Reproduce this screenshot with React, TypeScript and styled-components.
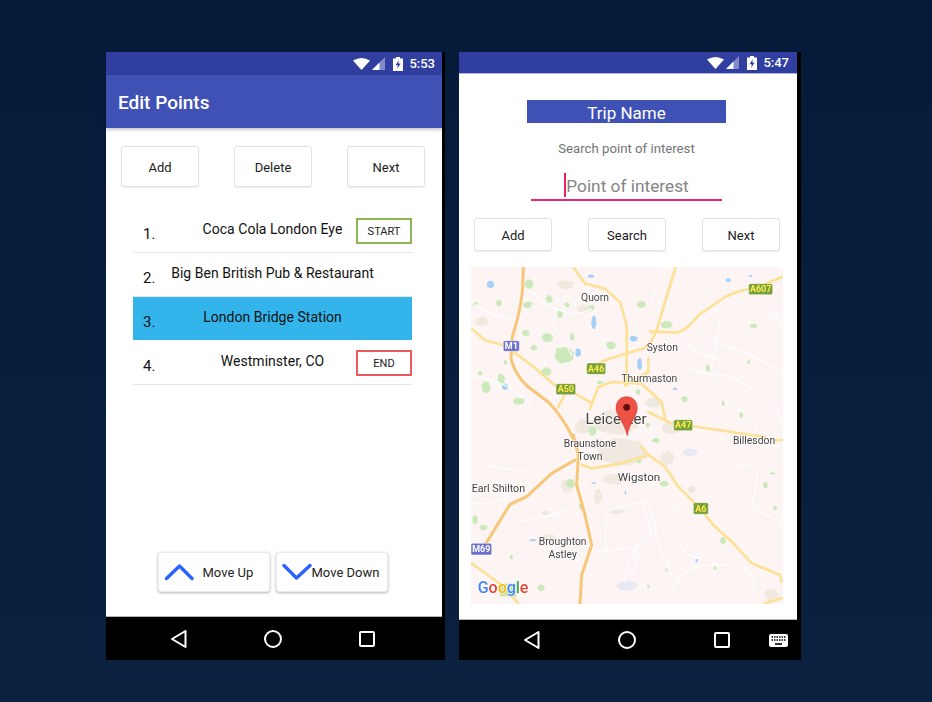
import React from "react";
import styled, { createGlobalStyle } from "styled-components";

const Global = createGlobalStyle`
  html, body { margin: 0; padding: 0; }
  body { font-family: Roboto, "Liberation Sans", sans-serif; }
  * { box-sizing: border-box; }
`;

const Page = styled.div`
  width: 932px;
  height: 702px;
  overflow: hidden;
  display: flex;
  align-items: flex-start;
  gap: 14px;
  padding: 52px 0 0 106px;
  background: linear-gradient(180deg, #041a38 0%, #0a2240 100%);
`;
const Phone = styled.div<{ $width: number; $screen: number }>`
  width: ${(p) => p.$width}px;
  height: 608px;
  background: #000;
  display: flex;
  flex-direction: column;
  & > .screen { width: ${(p) => p.$screen}px; }
`;
const Screen = styled.div`
  flex: 1;
  min-height: 0;
  background: #fff;
  display: flex;
  flex-direction: column;
`;
const StatusBar = styled.div<{ $height: number; $right: number; $line?: boolean }>`
  height: ${(p) => p.$height}px;
  flex: none;
  background: #303f9f;
  display: flex;
  align-items: center;
  justify-content: flex-end;
  padding-right: ${(p) => p.$right}px;
  border-bottom: ${(p) => (p.$line ? "1px solid #a9b2e0" : "none")};
`;
const Clock = styled.span`
  color: #fff;
  font-size: 13px;
  font-weight: 500;
  margin-left: 6px;
`;
const AppBar = styled.div`
  height: 53px;
  flex: none;
  background: #3f51b5;
  display: flex;
  align-items: center;
  padding: 2px 0 0 12px;
  color: #fff;
  font-size: 19px;
  font-weight: 500;
  box-shadow: 0 2px 3px rgba(0, 0, 0, 0.22);
`;
const Toolbar = styled.div<{ $top: number }>`
  display: flex;
  justify-content: space-between;
  padding: 0 17px 0 15px;
  margin-top: ${(p) => p.$top}px;
`;
const Button = styled.div<{ $height: number }>`
  width: 78px;
  height: ${(p) => p.$height}px;
  display: flex;
  align-items: center;
  justify-content: center;
  padding-top: 1px;
  background: #fff;
  border: 1px solid #e2e2e2;
  border-radius: 3px;
  box-shadow: 0 1px 1px rgba(0, 0, 0, 0.08);
  font-size: 13px;
  color: #1c1c1c;
`;
const List = styled.div`
  margin: 22px 30px 0 27px;
`;
const Row = styled.div<{ $active?: boolean }>`
  height: 44px;
  display: grid;
  grid-template-columns: 1fr auto 1fr;
  align-items: start;
  background: ${(p) => (p.$active ? "#33b5ec" : "transparent")};
  background-clip: padding-box;
  border-bottom: 1px solid ${(p) => (p.$active ? "transparent" : "#e6e6e6")};
  color: #111;
`;
const Num = styled.span`
  font-size: 15px;
  line-height: 20px;
  margin: 15px 0 0 10px;
`;
const Name = styled.span`
  font-size: 14px;
  line-height: 20px;
  margin-top: 10px;
  white-space: nowrap;
  letter-spacing: 0.03px;
`;
const Tag = styled.span<{ $color: string }>`
  justify-self: end;
  width: 56px;
  height: 26px;
  margin-top: 9px;
  border: 2px solid ${(p) => p.$color};
  display: flex;
  align-items: center;
  justify-content: center;
  font-size: 11px;
  color: #222;
`;
const Actions = styled.div`
  margin-top: auto;
  padding: 0 3px 24px 0;
  display: flex;
  justify-content: center;
  gap: 6px;
`;
const MoveButton = styled.div<{ $gap: number }>`
  width: 112px;
  height: 40px;
  display: flex;
  align-items: center;
  gap: ${(p) => p.$gap}px;
  padding-left: 5px;
  background: #fff;
  border-radius: 3px;
  border: 1px solid #ececec;
  box-shadow: 0 1px 3px rgba(0, 0, 0, 0.3);
  font-size: 13px;
  color: #222;
  white-space: nowrap;
`;
const Nav = styled.div<{ $height: number; $gap: number }>`
  height: ${(p) => p.$height}px;
  flex: none;
  display: flex;
  align-items: center;
  padding-left: 63px;
  & > svg + svg { margin-left: ${(p) => p.$gap}px; }
`;
const NavLine = styled.div`
  height: 1px;
  flex: none;
  background: #b5b5b5;
`;
const Keyboard = styled.svg`
  && { margin-left: 37px; }
`;
const Content = styled.div`
  flex: 1;
  min-height: 0;
  display: flex;
  flex-direction: column;
  align-items: stretch;
`;
const TripName = styled.div`
  align-self: center;
  width: 199px;
  height: 23px;
  margin: 26px 3px 0 0;
  background: #3f51b5;
  color: #fff;
  font-size: 17px;
  line-height: 27px;
  text-align: center;
`;
const Hint = styled.div`
  margin: 16px 3px 0 0;
  font-size: 13.2px;
  line-height: 19px;
  color: #757575;
  text-align: center;
`;
const SearchField = styled.div`
  align-self: center;
  width: 191px;
  height: 28px;
  margin: 15px 3px 0 0;
  border-bottom: 2px solid #f0256c;
  display: flex;
  justify-content: center;
`;
const Placeholder = styled.span`
  height: 24px;
  line-height: 27px;
  font-size: 17.3px;
  color: #858585;
  border-left: 2px solid #e91e63;
`;
const MapBox = styled.div`
  margin: 16px 14px 0 12px;
  height: 337px;
  flex: none;
`;
const MapSvg = styled.svg`
  display: block;
  filter: blur(0.35px);
`;

const Wifi = () => (
  <svg width="17" height="12" viewBox="0 0 17 12">
    <path d="M0 2.6 Q8.5 -2.6 17 2.6 L8.5 12 Z" fill="#fff" />
  </svg>
);
const Signal = () => (
  <svg width="13" height="13" viewBox="0 0 13 13" style={{ marginLeft: 2 }}>
    <path d="M0 13 L13 0 V13 Z" fill="#fff" fillOpacity="0.4" />
    <path d="M0 13 L7.5 5.5 V13 Z" fill="#fff" />
  </svg>
);
const Battery = () => (
  <svg width="10" height="14" viewBox="0 0 10 14" style={{ marginLeft: 8 }}>
    <path d="M3 0 H7 V1.5 H10 V14 H0 V1.5 H3 Z" fill="#fff" />
    <path d="M5.8 3 L2.6 8.2 H4.8 L4.2 12 L7.6 6.6 H5.3 Z" fill="#303f9f" />
  </svg>
);
const Back = () => (
  <svg width="20" height="20" viewBox="0 0 20 20">
    <path d="M16.5 2 V18 L3 10 Z" fill="none" stroke="#fff" strokeWidth="2" strokeLinejoin="round" />
  </svg>
);
const Home = () => (
  <svg width="20" height="20" viewBox="0 0 20 20">
    <circle cx="10" cy="10" r="8" fill="none" stroke="#fff" strokeWidth="2" />
  </svg>
);
const Recent = () => (
  <svg width="20" height="20" viewBox="0 0 20 20">
    <rect x="3" y="3" width="14" height="14" rx="1" fill="none" stroke="#fff" strokeWidth="2" />
  </svg>
);
const Up = () => (
  <svg width="30" height="20" viewBox="0 0 30 20" style={{ flex: "none" }}>
    <path d="M2.5 16.5 L15.5 4 L28 16.5" fill="none" stroke="#2962ff" strokeWidth="3.4" strokeLinecap="round" strokeLinejoin="round" />
  </svg>
);
const Down = () => (
  <svg width="30" height="20" viewBox="0 0 30 20" style={{ flex: "none" }}>
    <path d="M2 3.5 L14.5 16 L28 3.5" fill="none" stroke="#2962ff" strokeWidth="3.4" strokeLinecap="round" strokeLinejoin="round" />
  </svg>
);

const yellow = [
  "M950,45 L880,75 Q820,85 780,105 L700,160 Q660,212 630,212 L555,208",
  "M632,15 L600,120 L575,205 L560,235 L540,258 L480,275 L420,295 L365,320",
  "M325,15 L360,65 L420,80 L465,120 L485,190 L485,370",
  "M20,200 L60,235 L115,250",
  "M140,265 L200,310 L270,370 L330,395 L375,420",
  "M280,435 L300,395",
  "M375,440 L400,375 L440,360 L530,365 L590,420 L600,470",
  "M550,450 L620,485 L700,495 L800,510 L900,525",
  "M550,290 L550,330 L480,370",
];
const motorway = "M175,15 L173,75 Q170,120 155,180 L142,225 L138,290 Q150,340 190,375 L250,420 Q290,460 325,530";
const yellow2 = [
  "M530,35 L550,60 L600,95 L640,155 L700,215 L745,270 L800,320 L860,385 L945,420 L950,440",
  "M350,90 L380,100 L470,85 L550,60",
  "M20,385 L110,450 L160,505",
  "M950,490 L900,505",
  "M930,15 L950,15",
];
const motorway2 = [
  "M330,75 L260,115 L185,185 L135,208 L60,330",
  "M325,0 L340,60 L335,150 L360,240 L380,330 L350,420 L345,505",
];
const white1 = [
  "M20,120 Q60,150 90,160 T150,170",
  "M200,90 Q250,140 300,150 T380,140",
  "M700,200 Q750,250 800,260 T950,330",
  "M650,300 Q700,340 760,340 T880,400 L950,470",
  "M20,340 Q80,350 120,370 T200,430",
  "M720,90 Q770,150 760,210 T740,320",
  "M600,15 L560,120",
  "M820,120 Q880,130 950,180",
  "M250,170 Q290,220 320,280",
  "M780,420 Q840,440 880,510",
  "M660,240 Q700,280 780,300",
];
const white2 = [
  "M20,205 Q80,210 130,190",
  "M420,230 Q520,200 540,200 T580,330 L620,420",
  "M530,200 Q550,260 560,300",
  "M640,210 Q560,270 520,330 T480,440",
  "M160,260 Q240,250 320,220",
  "M400,350 Q470,340 500,340 T500,420",
  "M620,460 Q660,380 780,390 T860,480",
  "M800,90 Q880,90 880,100 T860,220 L950,260",
  "M60,90 Q120,100 180,110",
  "M430,240 Q410,300 430,350",
  "M640,320 Q660,360 700,370",
];
type B = [number, number, number, number];
const green1: B[] = [
  [190, 70, 14, 18], [100, 122, 10, 12], [250, 225, 20, 16], [300, 285, 34, 30],
  [240, 330, 18, 14], [160, 415, 18, 12], [65, 375, 14, 18], [605, 190, 18, 12],
  [435, 250, 16, 12], [530, 125, 14, 10], [730, 318, 8, 12], [865, 193, 14, 8],
  [380, 505, 14, 18], [660, 410, 12, 10], [830, 460, 6, 10], [305, 130, 8, 8],
  [30, 125, 10, 6], [110, 350, 12, 16], [190, 130, 16, 10], [180, 215, 12, 12],
  [205, 255, 12, 10], [255, 110, 12, 14], [285, 160, 10, 14], [320, 225, 8, 12],
  [405, 360, 10, 6], [520, 390, 8, 8], [775, 425, 5, 8], [850, 300, 5, 6],
  [380, 135, 10, 10], [550, 490, 8, 8], [45, 335, 8, 8], [120, 300, 6, 8],
];
const green2: B[] = [
  [315, 148, 14, 16], [570, 15, 14, 8], [600, 145, 16, 10], [775, 320, 10, 14],
  [28, 255, 10, 14], [55, 275, 12, 10], [230, 458, 12, 10], [350, 215, 8, 12],
  [900, 150, 8, 10], [930, 218, 6, 8], [925, 115, 10, 4], [750, 400, 6, 6],
  [520, 78, 10, 8], [140, 365, 6, 8], [605, 405, 4, 6], [550, 455, 4, 6],
];
const water1: B[] = [
  [75, 70, 12, 14], [385, 178, 9, 24], [380, 42, 12, 6], [340, 275, 10, 16],
  [118, 375, 12, 10], [505, 228, 12, 10], [525, 305, 8, 18], [790, 55, 8, 6],
  [855, 42, 7, 3], [630, 380, 8, 4],
];
const water2: B[] = [
  [385, 145, 9, 3], [481, 172, 3, 8], [205, 315, 14, 4], [695, 378, 4, 8],
];
const faint2: B[] = [[672, 55, 24, 14], [480, 450, 38, 18]];
const urban1: B[] = [
  [440, 490, 70, 45], [350, 490, 30, 25], [570, 420, 30, 18], [530, 130, 16, 14],
  [45, 180, 24, 14], [300, 65, 24, 16], [360, 140, 22, 14], [620, 500, 30, 20],
];
const urban2: B[] = [
  [460, 60, 80, 50], [440, 130, 40, 18], [310, 150, 22, 24], [400, 190, 14, 28],
  [600, 70, 26, 22], [240, 232, 12, 8], [255, 310, 24, 14], [680, 165, 12, 12],
  [915, 480, 24, 18], [455, 228, 24, 8],
];

// Irregular patch outline, repeatable from its index.
const patch = ([cx, cy, rx, ry]: B, seed: number) => {
  const pts: string[] = [];
  for (let a = 0; a < 7; a++) {
    const k = 0.55 + 0.6 * Math.abs(Math.sin(seed * 12.9 + a * 78.2));
    const t = (a / 7) * Math.PI * 2 + seed;
    pts.push(`${(cx + Math.cos(t) * rx * k).toFixed(1)},${(cy + Math.sin(t) * ry * k).toFixed(1)}`);
  }
  return pts.join(" ");
};
const Blobs = ({ items, fill }: { items: B[]; fill: string }) => (
  <>
    {items.map((b, i) => (
      <polygon key={i} points={patch(b, i + 1)} fill={fill} />
    ))}
  </>
);
const Roads = ({ d, color, width }: { d: string[]; color: string; width: number }) => (
  <>
    {d.map((p, i) => (
      <path key={i} d={p} fill="none" stroke={color} strokeWidth={width} strokeLinejoin="round" strokeLinecap="round" />
    ))}
  </>
);
const Shield = ({ x, y, w, h, t, blue }: { x: number; y: number; w: number; h: number; t: string; blue?: boolean }) => (
  <g>
    <rect x={x} y={y} width={w} height={h} rx="5" fill={blue ? "#6b70cc" : "#76a03a"} stroke="#fff" strokeOpacity="0.7" strokeWidth="2" />
    <text x={x + w / 2} y={y + h / 2 + 10} textAnchor="middle" fontSize="27" fontWeight="700" fill={blue ? "#fff" : "#ffe94d"} fontFamily="Roboto, sans-serif">{t}</text>
  </g>
);
const Label = ({ x, y, t, size = 31, anchor = "middle" }: { x: number; y: number; t: string; size?: number; anchor?: "middle" | "start" }) => (
  <text x={x} y={y} textAnchor={anchor} fontSize={size} fill="#444" fontFamily="Roboto, sans-serif" stroke="#fff" strokeOpacity="0.8" strokeWidth="4" style={{ paintOrder: "stroke" }}>{t}</text>
);

const MapDrawing = () => (
  <MapSvg width="312" height="337" viewBox="0 0 312 337">
    <rect width="312" height="337" fill="#fdf4f4" />
    <g transform="translate(-6,-5) scale(0.33333)">
      <Blobs items={urban1} fill="#efe9df" />
      <Blobs items={green1} fill="#cbe9bb" />
      <Blobs items={water1} fill="#a5cff5" />
      <Roads d={white1} color="#ffffff" width={3.5} />
      <Roads d={yellow} color="#fde196" width={8} />
      <Roads d={[motorway]} color="#f8c678" width={9} />
      <Shield x={115} y={236} w={48} h={32} t="M1" blue />
      <Shield x={365} y={303} w={57} h={34} t="A46" />
      <Shield x={273} y={365} w={59} h={33} t="A50" />
      <Shield x={626} y={473} w={57} h={33} t="A47" />
      <Shield x={851} y={65} w={72} h={33} t="A607" />
      <Label x={390} y={116} t="Quorn" />
      <Label x={592} y={266} t="Syston" />
      <Label x={553} y={360} t="Thurmaston" />
    </g>
    <g transform="translate(-6,168) scale(0.33333)">
      <Blobs items={urban2} fill="#efe9df" />
      <Blobs items={green2} fill="#cbe9bb" />
      <Blobs items={water2} fill="#a9d0f5" />
      <Blobs items={faint2} fill="#e9e9f4" />
      <Roads d={white2} color="#ffffff" width={3.5} />
      <Roads d={yellow2} color="#fde196" width={8} />
      <Roads d={motorway2} color="#f8c678" width={9} />
      <Shield x={685} y={203} w={45} h={35} t="A6" />
      <Shield x={18} y={325} w={62} h={35} t="M69" blue />
      <Label x={375} y={37} t="Braunstone" />
      <Label x={375} y={75} t="Town" />
      <Label x={867} y={26} t="Billesdon" />
      <Label x={522} y={139} t="Wigston" size={35} />
      <Label x={20} y={172} t="Earl Shilton" anchor="start" size={32} />
      <Label x={293} y={331} t="Broughton" />
      <Label x={293} y={368} t="Astley" />
      <rect x="104" y="446" width="50" height="38" fill="#cbe3a8" />
      <text x="38" y="473" fontSize="48" fontWeight="500" fontFamily="Roboto, sans-serif" stroke="#fff" strokeWidth="3" style={{ paintOrder: "stroke" }}>
        <tspan fill="#4285f4">G</tspan>
        <tspan fill="#ea4335">o</tspan>
        <tspan fill="#fbbc05">o</tspan>
        <tspan fill="#4285f4">g</tspan>
        <tspan fill="#34a853">l</tspan>
        <tspan fill="#ea4335">e</tspan>
      </text>
    </g>
    <g transform="translate(-6,-5) scale(0.33333)">
      <Label x={453} y={487} t="Leicester" size={45} />
      <path d="M485,404 C462,404 453,422 453,438 C453,462 478,480 487,522 C494,480 517,462 517,438 C517,422 508,404 485,404 Z" fill="#ee5145" stroke="#c5352b" strokeWidth="1.5" />
      <circle cx="485" cy="436" r="10" fill="#5c0f0b" />
    </g>
  </MapSvg>
);

export default function App() {
  return (
    <Page>
      <Global />
      <Phone $width={339} $screen={336}>
        <StatusBar className="screen" $height={23} $right={7}>
          <Wifi />
          <Signal />
          <Battery />
          <Clock>5:53</Clock>
        </StatusBar>
        <Screen className="screen">
          <AppBar>Edit Points</AppBar>
          <Toolbar $top={18}>
            <Button $height={41}>Add</Button>
            <Button $height={41}>Delete</Button>
            <Button $height={41}>Next</Button>
          </Toolbar>
          <List>
            <Row>
              <Num>1.</Num>
              <Name>Coca Cola London Eye</Name>
              <Tag $color="#8db654">START</Tag>
            </Row>
            <Row>
              <Num>2.</Num>
              <Name>Big Ben British Pub &amp; Restaurant</Name>
            </Row>
            <Row $active>
              <Num>3.</Num>
              <Name>London Bridge Station</Name>
            </Row>
            <Row>
              <Num>4.</Num>
              <Name>Westminster, CO</Name>
              <Tag $color="#ea5a5a">END</Tag>
            </Row>
          </List>
          <Actions>
            <MoveButton $gap={9}>
              <Up />
              Move Up
            </MoveButton>
            <MoveButton $gap={0}>
              <Down />
              Move Down
            </MoveButton>
          </Actions>
        </Screen>
        <NavLine className="screen" />
        <Nav $height={43} $gap={74}>
          <Back />
          <Home />
          <Recent />
        </Nav>
      </Phone>
      <Phone $width={342} $screen={338}>
        <StatusBar className="screen" $height={22} $right={8} $line>
          <Wifi />
          <Signal />
          <Battery />
          <Clock>5:47</Clock>
        </StatusBar>
        <Screen className="screen">
          <Content>
            <TripName>Trip Name</TripName>
            <Hint>Search point of interest</Hint>
            <SearchField>
              <Placeholder>Point of interest</Placeholder>
            </SearchField>
            <Toolbar $top={17}>
              <Button $height={33}>Add</Button>
              <Button $height={33}>Search</Button>
              <Button $height={33}>Next</Button>
            </Toolbar>
            <MapBox>
              <MapDrawing />
            </MapBox>
          </Content>
        </Screen>
        <NavLine className="screen" />
        <Nav $height={40} $gap={75}>
          <Back />
          <Home />
          <Recent />
          <Keyboard width="19" height="13" viewBox="0 0 19 13">
            <rect width="19" height="13" rx="2" fill="#fff" />
            <path d="M2.5 3h14M2.5 6h14" stroke="#000" strokeWidth="1.6" strokeDasharray="1.5 1" />
            <path d="M6 10h7" stroke="#000" strokeWidth="1.6" />
          </Keyboard>
        </Nav>
      </Phone>
    </Page>
  );
}
